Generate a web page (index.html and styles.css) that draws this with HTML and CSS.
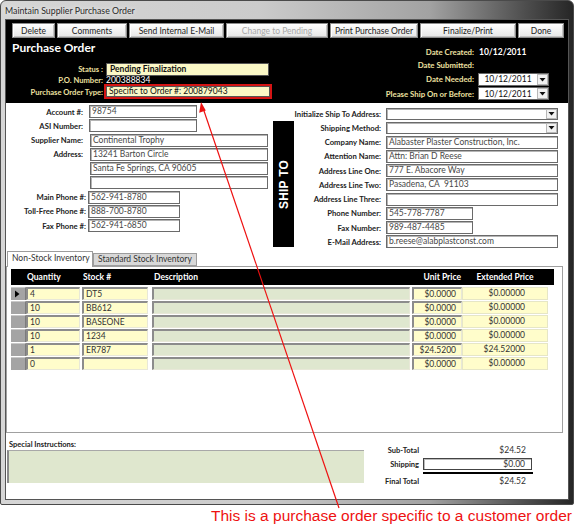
FILE: index.html
```html
<!DOCTYPE html>
<html lang="en">
<head>
    <meta charset="UTF-8">
    <title>Maintain Supplier Purchase Order</title>
    <link rel="stylesheet" href="styles.css">
</head>
<body>
<div class="page">
    <div class="window">
        <div class="titlebar">Maintain Supplier Purchase Order</div>
        <div class="client">

            <!-- Black header with toolbar and order info -->
            <div class="header">
                <div class="toolbar">
                    <button class="btn btn-delete">Delete</button>
                    <button class="btn btn-comments">Comments</button>
                    <button class="btn btn-email">Send Internal E-Mail</button>
                    <button class="btn btn-pending" disabled>Change to Pending</button>
                    <button class="btn btn-print">Print Purchase Order</button>
                    <button class="btn btn-finalize">Finalize/Print</button>
                    <button class="btn btn-done">Done</button>
                </div>
                <div class="hdr-cols">
                    <div class="hdr-left">
                        <div class="po-title">Purchase Order</div>
                        <div class="hrow status-row">
                            <span class="hlabel">Status :</span>
                            <span class="hfield status-field">Pending Finalization</span>
                        </div>
                        <div class="hrow po-row">
                            <span class="hlabel">P.O. Number:</span>
                            <span class="hvalue">200388834</span>
                        </div>
                        <div class="hrow type-row">
                            <span class="hlabel">Purchase Order Type:</span>
                            <span class="hfield type-field">Specific to Order #: 200879043</span>
                        </div>
                    </div>
                    <div class="hdr-right">
                        <div class="drow created-row">
                            <span class="dlabel">Date Created:</span>
                            <span class="dvalue">10/12/2011</span>
                        </div>
                        <div class="drow">
                            <span class="dlabel">Date Submitted:</span>
                            <span class="dvalue"></span>
                        </div>
                        <div class="drow needed-row">
                            <span class="dlabel">Date Needed:</span>
                            <span class="date-box"><span class="date-text">10/12/2011</span><span class="drop"><svg width="9" height="9" viewBox="0 0 9 9"><path d="M1.5 3h6l-3 3.5z" fill="#111"/></svg></span></span>
                        </div>
                        <div class="drow ship-row">
                            <span class="dlabel">Please Ship On or Before:</span>
                            <span class="date-box"><span class="date-text">10/12/2011</span><span class="drop"><svg width="9" height="9" viewBox="0 0 9 9"><path d="M1.5 3h6l-3 3.5z" fill="#111"/></svg></span></span>
                        </div>
                    </div>
                </div>
            </div>

            <!-- Supplier and ship to forms -->
            <div class="top-forms">
                <div class="supplier">
                    <div class="frow"><span class="flabel">Account #:</span><span class="fld w-short">98754</span></div>
                    <div class="frow"><span class="flabel">ASI Number:</span><span class="fld w-short"></span></div>
                    <div class="frow"><span class="flabel">Supplier Name:</span><span class="fld w-long">Continental Trophy</span></div>
                    <div class="frow"><span class="flabel">Address:</span><span class="fld w-long">13241 Barton Circle</span></div>
                    <div class="frow"><span class="flabel"></span><span class="fld w-long">Santa Fe Springs, CA 90605</span></div>
                    <div class="frow"><span class="flabel"></span><span class="fld w-long"></span></div>
                    <div class="frow phone"><span class="flabel">Main Phone #:</span><span class="fld w-phone">562-941-8780</span></div>
                    <div class="frow phone"><span class="flabel">Toll-Free Phone #:</span><span class="fld w-phone">888-700-8780</span></div>
                    <div class="frow phone"><span class="flabel">Fax Phone #:</span><span class="fld w-phone">562-941-6850</span></div>
                </div>

                <div class="shipto-bar"><span>SHIP TO</span></div>

                <div class="shipto">
                    <div class="srow"><span class="slabel">Initialize Ship To Address:</span><span class="fld combo w-ship"><span class="drop"><svg width="9" height="9" viewBox="0 0 9 9"><path d="M1.5 3h6l-3 3.5z" fill="#111"/></svg></span></span></div>
                    <div class="srow"><span class="slabel">Shipping Method:</span><span class="fld combo w-ship"><span class="drop"><svg width="9" height="9" viewBox="0 0 9 9"><path d="M1.5 3h6l-3 3.5z" fill="#111"/></svg></span></span></div>
                    <div class="srow"><span class="slabel">Company Name:</span><span class="fld w-ship">Alabaster Plaster Construction, Inc.</span></div>
                    <div class="srow"><span class="slabel">Attention Name:</span><span class="fld w-ship">Attn: Brian D Reese</span></div>
                    <div class="srow"><span class="slabel">Address Line One:</span><span class="fld w-ship">777 E. Abacore Way</span></div>
                    <div class="srow"><span class="slabel">Address Line Two:</span><span class="fld w-ship">Pasadena, CA&nbsp; 91103</span></div>
                    <div class="srow"><span class="slabel">Address Line Three:</span><span class="fld w-ship"></span></div>
                    <div class="srow"><span class="slabel">Phone Number:</span><span class="fld w-sphone">545-778-7787</span></div>
                    <div class="srow"><span class="slabel">Fax Number:</span><span class="fld w-sphone">989-487-4485</span></div>
                    <div class="srow"><span class="slabel">E-Mail Address:</span><span class="fld w-ship">b.reese@alabplastconst.com</span></div>
                </div>
            </div>

            <!-- Inventory tabs -->
            <div class="tabs">
                <div class="tab active">Non-Stock Inventory</div>
                <div class="tab">Standard Stock Inventory</div>
            </div>
            <div class="tab-panel">
                <div class="grid-head">
                    <span></span>
                    <span class="gh-qty">Quantity</span>
                    <span class="gh-stock">Stock #</span>
                    <span class="gh-desc">Description</span>
                    <span class="gh-unit">Unit Price</span>
                    <span class="gh-ext">Extended Price</span>
                </div>
                <div class="grid-row">
                    <span class="sel current"><svg width="6" height="8" viewBox="0 0 6 8"><path d="M1 0.5v7l4.5-3.5z" fill="#000"/></svg></span>
                    <span class="cell qty">4</span>
                    <span class="cell stock">DT5</span>
                    <span class="cell desc"></span>
                    <span class="cell unit">$0.0000</span>
                    <span class="cell ext">$0.00000</span>
                </div>
                <div class="grid-row">
                    <span class="sel"></span>
                    <span class="cell qty">10</span>
                    <span class="cell stock">BB612</span>
                    <span class="cell desc"></span>
                    <span class="cell unit">$0.0000</span>
                    <span class="cell ext">$0.00000</span>
                </div>
                <div class="grid-row">
                    <span class="sel"></span>
                    <span class="cell qty">10</span>
                    <span class="cell stock">BASEONE</span>
                    <span class="cell desc"></span>
                    <span class="cell unit">$0.0000</span>
                    <span class="cell ext">$0.00000</span>
                </div>
                <div class="grid-row">
                    <span class="sel"></span>
                    <span class="cell qty">10</span>
                    <span class="cell stock">1234</span>
                    <span class="cell desc"></span>
                    <span class="cell unit">$0.0000</span>
                    <span class="cell ext">$0.00000</span>
                </div>
                <div class="grid-row">
                    <span class="sel"></span>
                    <span class="cell qty">1</span>
                    <span class="cell stock">ER787</span>
                    <span class="cell desc"></span>
                    <span class="cell unit">$24.5200</span>
                    <span class="cell ext">$24.52000</span>
                </div>
                <div class="grid-row">
                    <span class="sel"></span>
                    <span class="cell qty">0</span>
                    <span class="cell stock"></span>
                    <span class="cell desc"></span>
                    <span class="cell unit">$0.0000</span>
                    <span class="cell ext">$0.00000</span>
                </div>
            </div>

            <!-- Instructions and totals -->
            <div class="footer-area">
                <div class="instructions">
                    <div class="instr-label">Special Instructions:</div>
                    <div class="instr-box"></div>
                </div>
                <div class="totals">
                    <div class="trow"><span class="tlabel">Sub-Total</span><span class="tvalue">$24.52</span></div>
                    <div class="trow ship"><span class="tlabel">Shipping</span><span class="tvalue tbox">$0.00</span></div>
                    <div class="tline"></div>
                    <div class="trow final"><span class="tlabel">Final Total</span><span class="tvalue">$24.52</span></div>
                </div>
            </div>
        </div>
    </div>

    <div class="caption">This is a purchase order specific to a customer order</div>

    <!-- callout arrow drawn over the form -->
    <svg class="callout" width="575" height="527" viewBox="0 0 575 527">
        <line x1="339" y1="508" x2="203" y2="108" stroke="#ee1111" stroke-width="1.2"/>
        <path d="M201 102 L205.8 110.6 L199.2 112.8 Z" fill="#ee1111"/>
    </svg>
</div>
</body>
</html>
```

FILE: styles.css
```css
* {
    box-sizing: border-box;
}

body {
    margin: 0;
    background: #fff;
    font-family: Lato, "Liberation Sans", sans-serif;
    font-size: 8.5px;
    color: #222;
}

.page {
    position: relative;
    width: 575px;
    height: 527px;
    overflow: hidden;
}

/* Window frame */
.window {
    width: 574px;
    height: 505px;
    border: 1px solid #4a4a4a;
    border-radius: 6px 6px 2px 2px;
    background: linear-gradient(to right, #d6d6d6 0%, #cbcbcb 45%, #a2a2a2 75%, #4c4c4c 92%, #262626 100%);
    display: flex;
    flex-direction: column;
}

.titlebar {
    height: 19px;
    line-height: 19px;
    padding-left: 4px;
    font-size: 8.8px;
    color: #2a2a2a;
    text-shadow: 0 0 4px rgba(255, 255, 255, 0.9);
}

.client {
    margin: 0 5px 5px 5px;
    flex: 1;
    background: #fff;
    box-shadow: 0 0 0 1px #555;
    display: flex;
    flex-direction: column;
}

/* Header */
.header {
    background: #000;
    height: 83px;
    padding: 3px 0 0 6px;
}

.toolbar {
    display: flex;
    gap: 2px;
    height: 15px;
}

.btn {
    height: 15px;
    padding: 0;
    font-family: inherit;
    font-size: 8.5px;
    color: #222;
    background: linear-gradient(#ffffff, #e6e6e6);
    border: 1px solid #8c8c8c;
    box-shadow: inset 1px 1px 0 #fff, inset -1px -1px 0 #c4c4c4;
}

.btn:disabled {
    color: #a8a8a8;
}

.btn-delete { width: 43px; }
.btn-comments { width: 70px; }
.btn-email { width: 95px; }
.btn-pending { width: 102px; }
.btn-print { width: 88px; }
.btn-finalize { width: 96px; }
.btn-done { width: 46px; }

.hdr-cols {
    display: flex;
}

.hdr-left {
    width: 274px;
}

.po-title {
    color: #fff;
    font-size: 12px;
    font-weight: bold;
    line-height: 18px;
    margin-top: 1px;
}

.hrow {
    display: flex;
    align-items: center;
}

.hlabel {
    width: 91px;
    text-align: right;
    color: #eee0a0;
    font-size: 7.6px;
    font-weight: bold;
    white-space: nowrap;
}

.status-row {
    height: 14px;
    margin-top: 5px;
}

.po-row {
    height: 8px;
}

.type-row {
    height: 15px;
}

.hfield {
    background: #fbf8c6;
    color: #111;
    height: 13px;
    line-height: 13px;
    padding: 0 3px;
    white-space: nowrap;
}

.status-field {
    width: 163px;
    margin-left: 3px;
    font-weight: bold;
    border: 1px solid #555;
    line-height: 11px;
}

.type-field {
    width: 168px;
    height: 15px;
    line-height: 11px;
    margin-left: 1px;
    border: 2px solid #d41414;
    box-shadow: inset 0 0 0 1px #555;
}

.hvalue {
    margin-left: 3px;
    color: #fff;
}

.hdr-right {
    flex: 1;
}

.drow {
    display: flex;
    align-items: center;
    height: 13px;
}

.created-row {
    margin-top: 7px;
}

.needed-row {
    margin-top: 1px;
    height: 14px;
}

.ship-row {
    margin-top: 1px;
}

.dlabel {
    width: 188px;
    text-align: right;
    color: #eee0a0;
    font-size: 7.8px;
    font-weight: bold;
}

.dvalue {
    margin-left: 5px;
    color: #fff;
    font-weight: bold;
}

.date-box {
    margin-left: 4px;
    width: 71px;
    height: 13px;
    background: #fff;
    border: 1px solid #666;
    display: flex;
    align-items: center;
    color: #111;
}

.date-text {
    flex: 1;
    text-align: center;
}

.drop {
    width: 11px;
    height: 11px;
    background: #f2f2f2;
    border: 1px solid #b8b8b8;
    display: flex;
    align-items: center;
    justify-content: center;
}

/* Supplier / ship to */
.top-forms {
    height: 148px;
    display: flex;
}

.supplier {
    width: 267px;
    padding-top: 2px;
}

.frow,
.srow {
    display: flex;
    align-items: center;
    height: 13px;
    margin-bottom: 1.25px;
}

.flabel {
    width: 77px;
    text-align: right;
    font-size: 7.7px;
    font-weight: bold;
    color: #222;
    white-space: nowrap;
    margin-right: 6px;
}

.phone .flabel {
    width: 80px;
    margin-right: 2px;
}

.fld {
    height: 13px;
    line-height: 11px;
    padding: 0 2px;
    background: #fff;
    border: 1px solid #6a6a6a;
    box-shadow: inset 1px 1px 0 #b4b4b4;
    color: #474747;
    white-space: nowrap;
    overflow: hidden;
}

.w-short { width: 108px; }
.w-long { width: 178px; margin-left: 1px; }
.w-phone { width: 92px; }

.shipto-bar {
    width: 21px;
    height: 126px;
    margin-top: 18px;
    background: #000;
    display: flex;
    align-items: center;
    justify-content: center;
}

.shipto-bar span {
    writing-mode: vertical-rl;
    transform: rotate(180deg);
    color: #fff;
    font-family: "Liberation Sans", Arial, sans-serif;
    font-weight: bold;
    font-size: 12px;
    letter-spacing: 0.2px;
}

.shipto {
    flex: 1;
    padding-top: 4px;
}

.slabel {
    width: 87px;
    text-align: right;
    font-size: 7.7px;
    font-weight: bold;
    color: #222;
    white-space: nowrap;
    margin-right: 5px;
}

.w-ship { width: 172px; }
.w-sphone { width: 87px; }

.combo {
    display: flex;
    justify-content: flex-end;
    align-items: center;
    padding: 0;
    height: 12px;
}

.combo .drop {
    height: 10px;
}

/* Tabs */
.tabs {
    display: flex;
    align-items: flex-end;
    height: 15px;
    margin-left: 1px;
    position: relative;
    z-index: 1;
}

.tab {
    height: 13px;
    line-height: 11px;
    padding: 0 4px;
    border: 1px solid #9c9c9c;
    background: #d8d8d8;
    color: #333;
    white-space: nowrap;
}

.tab.active {
    width: 86px;
    height: 16px;
    margin-bottom: -1px;
    line-height: 13px;
    background: #fff;
    border-bottom: none;
}

.tab-panel {
    width: 557px;
    height: 167px;
    border: 1px solid #a0a0a0;
    padding: 2px 0 0 4px;
}

.grid-head {
    display: grid;
    grid-template-columns: 15px 56px 70px 260px 50px 86px;
    width: 543px;
    height: 16px;
    line-height: 16px;
    background: #000;
    color: #fff;
    font-weight: bold;
    margin-bottom: 2px;
}

.gh-qty { padding-left: 1px; }
.gh-stock { padding-left: 1px; }
.gh-desc { padding-left: 2px; }
.gh-unit { text-align: right; padding-right: 1px; white-space: nowrap; }
.gh-ext { text-align: center; white-space: nowrap; }

.grid-row {
    display: grid;
    grid-template-columns: 15px 56px 70px 260px 50px 86px;
    height: 14px;
}

.sel {
    height: 13px;
    background: #a4a4a4;
    border-top: 1px solid #c8c8c8;
    border-right: 1px solid #7c7c7c;
    display: flex;
    align-items: center;
    padding-left: 3px;
}

.cell {
    height: 13px;
    line-height: 10px;
    padding: 0 2px;
    background: #fffdcb;
    border-top: 2px solid #8c8c8c;
    border-left: 2px solid #8c8c8c;
    border-right: 1px solid #e8e8d8;
    border-bottom: 1px solid #e8e8d8;
    color: #333;
    white-space: nowrap;
}

.qty { margin: 0 2px 0 0; }
.stock { margin: 0 4px 0 0; }
.desc { margin-right: 2px; background: #dfe7cf; }
.unit { text-align: right; padding-right: 5px; }
.ext {
    text-align: right;
    padding-right: 22px;
    border: 1px solid #e6e6c6;
    line-height: 11px;
}

/* Footer area */
.footer-area {
    display: flex;
}

.instructions {
    width: 358px;
}

.instr-label {
    padding: 6px 0 0 3px;
    font-size: 7.5px;
    font-weight: bold;
    line-height: 11px;
}

.instr-box {
    margin-left: 1px;
    width: 357px;
    height: 33px;
    background: #dfe7ce;
    border-left: 2px solid #8a8a8a;
    border-top: 1px solid #a8a8a8;
}

.totals {
    padding-top: 11px;
}

.trow {
    display: flex;
    align-items: center;
    height: 12px;
}

.trow.ship {
    height: 14px;
    margin-top: 1px;
}

.trow.final {
    height: 14px;
}

.tlabel {
    width: 55px;
    text-align: right;
    font-size: 7.5px;
    font-weight: bold;
}

.tvalue {
    width: 109px;
    margin-left: 4px;
    text-align: right;
    padding-right: 6px;
    color: #333;
}

.tbox {
    height: 12px;
    line-height: 10px;
    border: 1px solid #444;
    box-shadow: inset 1px 1px 0 #bbb;
}

.tline {
    margin: 1px 0 0 59px;
    width: 110px;
    height: 2px;
    background: #000;
}

/* Caption and arrow */
.caption {
    margin-top: 1px;
    padding-right: 3px;
    text-align: right;
    font-family: "Liberation Sans", Arial, sans-serif;
    font-size: 15.5px;
    line-height: 20px;
    color: #ee1111;
}

.callout {
    position: absolute;
    left: 0;
    top: 0;
    pointer-events: none;
}
```
